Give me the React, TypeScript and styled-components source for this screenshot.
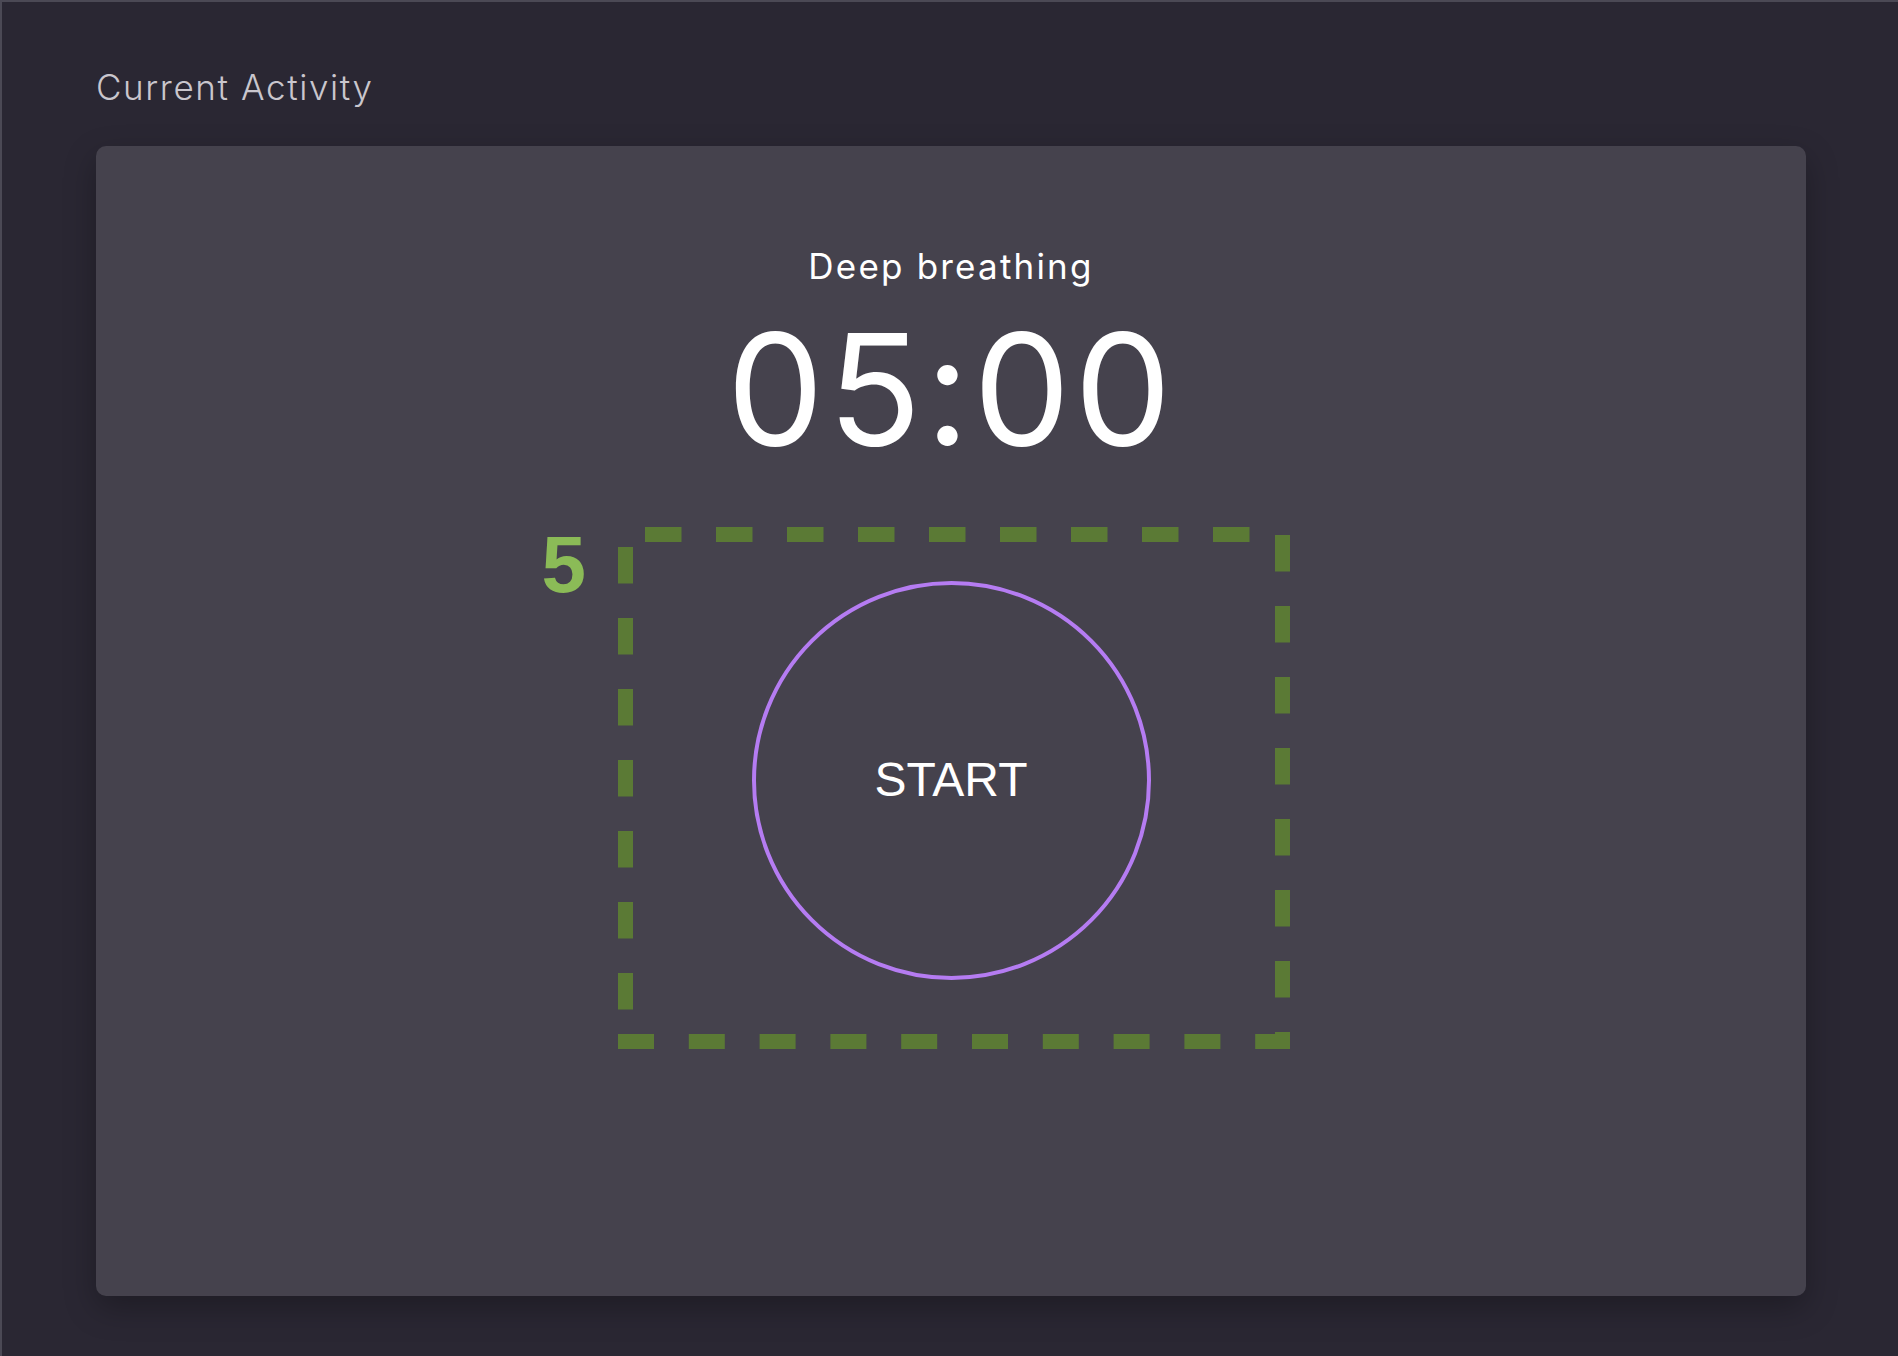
import React from "react";
import styled, { createGlobalStyle } from "styled-components";

const GlobalStyle = createGlobalStyle`
  html, body {
    margin: 0;
    padding: 0;
    background: #2a2733;
  }
  * { box-sizing: border-box; }
`;

const Page = styled.div`
  min-height: 100vh;
  background: #2a2733;
  border-top: 2px solid #4b4955;
  border-left: 2px solid #4b4955;
  padding: 68px 90px 60px 94px;
  font-family: Inter, "Liberation Sans", sans-serif;
`;

const Title = styled.h1`
  margin: 0 0 41px 0;
  font-size: 35px;
  line-height: 1;
  font-weight: 300;
  color: #c9c6cd;
  letter-spacing: 1.6px;
`;

const Card = styled.section`
  width: 1710px;
  height: 1150px;
  background: #45424d;
  border-radius: 10px;
  box-shadow: 0 12px 32px rgba(0, 0, 0, 0.28);
  display: flex;
  flex-direction: column;
  align-items: center;
  padding-top: 103px;
`;

const ActivityName = styled.div`
  font-size: 35px;
  line-height: 1;
  font-weight: 400;
  color: #ffffff;
  letter-spacing: 2.2px;
`;

const Timer = styled.div`
  margin-top: 28px;
  font-size: 154px;
  line-height: 1;
  font-weight: 400;
  color: #ffffff;
  letter-spacing: 3.8px;
`;

const ButtonArea = styled.div`
  position: relative;
  margin-top: 115px;
`;

const StartButton = styled.button`
  width: 399px;
  height: 399px;
  border-radius: 50%;
  border: 4px solid #b57cf2;
  background: transparent;
  color: #ffffff;
  font-family: "Liberation Sans", Arial, sans-serif;
  font-size: 48px;
  display: flex;
  align-items: center;
  justify-content: center;
  padding: 0 0 2px 0;
  cursor: pointer;
`;

const Highlight = styled.div`
  position: absolute;
  left: -134px;
  top: -54px;
  width: 672px;
  height: 522px;
  pointer-events: none;
`;

const HighlightLabel = styled.span`
  position: absolute;
  left: -76px;
  top: -2px;
  font-family: "Liberation Sans", Arial, sans-serif;
  font-weight: 700;
  font-size: 80px;
  line-height: 1;
  color: #8bbb57;
`;

const DashSvg = styled.svg`
  display: block;
  overflow: visible;
`;

const dash = {
  stroke: "#5b7a35",
  strokeWidth: 15,
  fill: "none",
  strokeDasharray: "36.5 34.5",
};

export default function App() {
  return (
    <>
      <GlobalStyle />
      <Page>
        <Title>Current Activity</Title>
        <Card>
          <ActivityName>Deep breathing</ActivityName>
          <Timer>05:00</Timer>
          <ButtonArea>
            <StartButton>START</StartButton>
            <Highlight>
              <DashSvg width="672" height="522" viewBox="0 0 672 522">
                <path d="M27 7.5 H664.5" style={dash} />
                <path d="M664.5 8 V514.5" style={dash} />
                <path d="M0 514.5 H672" style={{ ...dash, strokeDasharray: "36 34.8" }} />
                <path d="M7.5 20 V514.5" style={dash} />
              </DashSvg>
              <HighlightLabel>5</HighlightLabel>
            </Highlight>
          </ButtonArea>
        </Card>
      </Page>
    </>
  );
}
